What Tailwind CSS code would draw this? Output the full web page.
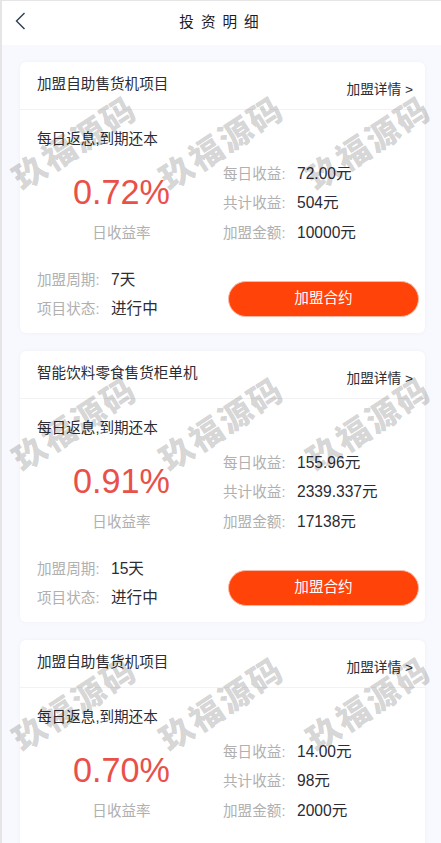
<!DOCTYPE html>
<html lang="zh-CN">
<head>
<meta charset="UTF-8">
<title>投资明细</title>
<meta name="viewport" content="width=device-width,initial-scale=1" />
<script src="https://cdn.jsdelivr.net/npm/@tailwindcss/browser@4"></script>
</head>
<body class="bg-[#f8f9fe] font-['Liberation_Sans','Noto_Sans_CJK_SC',sans-serif] text-[14.6px] text-[#2c2c34]">
<div class="relative h-[843px] w-[441px] overflow-hidden border-t border-l-2 border-[#e5e5e5]">

  <header class="relative flex h-[44px] items-center justify-center bg-white">
    <svg class="absolute left-[12px] top-[10px]" width="12" height="20" viewBox="0 0 12 20" fill="none" stroke="#2c3e50" stroke-width="1.4"><path d="M10.5 2 L2.5 10 L10.5 18"/></svg>
    <h1 class="pl-[2px] tracking-[7px] text-[#1c1c24]">投资明细</h1>
  </header>

  <main class="flex flex-col gap-[18px] px-[18px] pt-[17px]">

    <section class="h-[271px] w-[405px] shrink-0 rounded-md bg-white shadow-[0_0_4px_rgba(0,0,0,0.04)]">
      <div class="relative h-[48px] border-b border-[#f2f2f4] pl-[17px] pt-[12px]">
        <span>加盟自助售货机项目</span>
        <a class="absolute right-[12px] top-[18px] text-[13.7px]">加盟详情 &gt;</a>
      </div>
      <p class="pl-[17px] pt-[19px]">每日返息,到期还本</p>
      <div class="flex pt-[1px]">
        <div class="w-[203px] pt-[17px] text-center">
          <div class="text-[34.2px] leading-[46px] text-[#e9504a]">0.72%</div>
          <div class="pt-[8px] text-[#b0b0b0]">日收益率</div>
        </div>
        <dl class="flex flex-col gap-[9px] pt-[12px] leading-[20.5px]">
          <div class="flex"><dt class="w-[74px] text-[#b0b0b0]">每日收益:</dt><dd class="text-[15.6px]">72.00元</dd></div>
          <div class="flex"><dt class="w-[74px] text-[#b0b0b0]">共计收益:</dt><dd class="text-[15.6px]">504元</dd></div>
          <div class="flex"><dt class="w-[74px] text-[#b0b0b0]">加盟金额:</dt><dd class="text-[15.6px]">10000元</dd></div>
        </dl>
      </div>
      <div class="flex items-start justify-between pl-[17px] pr-[6px] pt-[25px]">
        <dl class="flex flex-col gap-[9px] leading-[20.5px]">
          <div class="flex"><dt class="w-[74px] text-[#b0b0b0]">加盟周期:</dt><dd class="text-[15.6px]">7天</dd></div>
          <div class="flex"><dt class="w-[74px] text-[#b0b0b0]">项目状态:</dt><dd class="text-[15.6px]">进行中</dd></div>
        </dl>
        <button class="mt-[11px] h-[36px] w-[191px] rounded-full border border-[#f7b9a5] bg-[#ff4309] text-white">加盟合约</button>
      </div>
    </section>

    <section class="h-[271px] w-[405px] shrink-0 rounded-md bg-white shadow-[0_0_4px_rgba(0,0,0,0.04)]">
      <div class="relative h-[48px] border-b border-[#f2f2f4] pl-[17px] pt-[12px]">
        <span>智能饮料零食售货柜单机</span>
        <a class="absolute right-[12px] top-[18px] text-[13.7px]">加盟详情 &gt;</a>
      </div>
      <p class="pl-[17px] pt-[19px]">每日返息,到期还本</p>
      <div class="flex pt-[1px]">
        <div class="w-[203px] pt-[17px] text-center">
          <div class="text-[34.2px] leading-[46px] text-[#e9504a]">0.91%</div>
          <div class="pt-[8px] text-[#b0b0b0]">日收益率</div>
        </div>
        <dl class="flex flex-col gap-[9px] pt-[12px] leading-[20.5px]">
          <div class="flex"><dt class="w-[74px] text-[#b0b0b0]">每日收益:</dt><dd class="text-[15.6px]">155.96元</dd></div>
          <div class="flex"><dt class="w-[74px] text-[#b0b0b0]">共计收益:</dt><dd class="text-[15.6px]">2339.337元</dd></div>
          <div class="flex"><dt class="w-[74px] text-[#b0b0b0]">加盟金额:</dt><dd class="text-[15.6px]">17138元</dd></div>
        </dl>
      </div>
      <div class="flex items-start justify-between pl-[17px] pr-[6px] pt-[25px]">
        <dl class="flex flex-col gap-[9px] leading-[20.5px]">
          <div class="flex"><dt class="w-[74px] text-[#b0b0b0]">加盟周期:</dt><dd class="text-[15.6px]">15天</dd></div>
          <div class="flex"><dt class="w-[74px] text-[#b0b0b0]">项目状态:</dt><dd class="text-[15.6px]">进行中</dd></div>
        </dl>
        <button class="mt-[11px] h-[36px] w-[191px] rounded-full border border-[#f7b9a5] bg-[#ff4309] text-white">加盟合约</button>
      </div>
    </section>

    <section class="h-[271px] w-[405px] shrink-0 rounded-md bg-white shadow-[0_0_4px_rgba(0,0,0,0.04)]">
      <div class="relative h-[48px] border-b border-[#f2f2f4] pl-[17px] pt-[12px]">
        <span>加盟自助售货机项目</span>
        <a class="absolute right-[12px] top-[18px] text-[13.7px]">加盟详情 &gt;</a>
      </div>
      <p class="pl-[17px] pt-[19px]">每日返息,到期还本</p>
      <div class="flex pt-[1px]">
        <div class="w-[203px] pt-[17px] text-center">
          <div class="text-[34.2px] leading-[46px] text-[#e9504a]">0.70%</div>
          <div class="pt-[8px] text-[#b0b0b0]">日收益率</div>
        </div>
        <dl class="flex flex-col gap-[9px] pt-[12px] leading-[20.5px]">
          <div class="flex"><dt class="w-[74px] text-[#b0b0b0]">每日收益:</dt><dd class="text-[15.6px]">14.00元</dd></div>
          <div class="flex"><dt class="w-[74px] text-[#b0b0b0]">共计收益:</dt><dd class="text-[15.6px]">98元</dd></div>
          <div class="flex"><dt class="w-[74px] text-[#b0b0b0]">加盟金额:</dt><dd class="text-[15.6px]">2000元</dd></div>
        </dl>
      </div>
    </section>
  </main>

  <!-- watermark over the page -->
  <div class="pointer-events-none absolute left-[-2px] top-[-1px] h-[843px] w-[441px] text-[33px] font-black tracking-[2px] text-black/18">
    <span class="absolute left-[75px] top-[144px] -translate-x-1/2 -translate-y-1/2 -rotate-[33deg] whitespace-nowrap">玖福源码</span>
    <span class="absolute left-[222px] top-[144px] -translate-x-1/2 -translate-y-1/2 -rotate-[33deg] whitespace-nowrap">玖福源码</span>
    <span class="absolute left-[369px] top-[144px] -translate-x-1/2 -translate-y-1/2 -rotate-[33deg] whitespace-nowrap">玖福源码</span>
    <span class="absolute left-[75px] top-[425px] -translate-x-1/2 -translate-y-1/2 -rotate-[33deg] whitespace-nowrap">玖福源码</span>
    <span class="absolute left-[222px] top-[425px] -translate-x-1/2 -translate-y-1/2 -rotate-[33deg] whitespace-nowrap">玖福源码</span>
    <span class="absolute left-[369px] top-[425px] -translate-x-1/2 -translate-y-1/2 -rotate-[33deg] whitespace-nowrap">玖福源码</span>
    <span class="absolute left-[75px] top-[705px] -translate-x-1/2 -translate-y-1/2 -rotate-[33deg] whitespace-nowrap">玖福源码</span>
    <span class="absolute left-[222px] top-[705px] -translate-x-1/2 -translate-y-1/2 -rotate-[33deg] whitespace-nowrap">玖福源码</span>
    <span class="absolute left-[369px] top-[705px] -translate-x-1/2 -translate-y-1/2 -rotate-[33deg] whitespace-nowrap">玖福源码</span>
  </div>
</div>
</body>
</html>
